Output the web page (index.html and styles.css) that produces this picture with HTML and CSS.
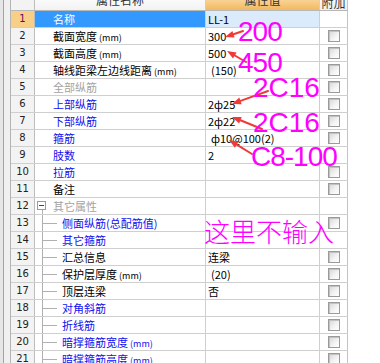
FILE: index.html
```html
<!DOCTYPE html>
<html>
<head>
<meta charset="utf-8">
<link rel="stylesheet" href="styles.css">
</head>
<body>
<div class="frame">
  <div class="gutter"></div>
  <div class="grid">
    <div class="row head">
      <div class="num"></div>
      <div class="name hname">属性名称</div>
      <div class="val hval">属性值</div>
      <div class="chk hchk">附加</div>
    </div>
    <div class="row sel">
      <div class="num">1</div>
      <div class="name">名称</div>
      <div class="val">LL-1</div>
      <div class="chk"></div>
    </div>
    <div class="row">
      <div class="num">2</div>
      <div class="name">截面宽度<span class="mm">(mm)</span></div>
      <div class="val">300</div>
      <div class="chk"><span class="box"></span></div>
    </div>
    <div class="row">
      <div class="num">3</div>
      <div class="name">截面高度<span class="mm">(mm)</span></div>
      <div class="val">500</div>
      <div class="chk"><span class="box"></span></div>
    </div>
    <div class="row">
      <div class="num">4</div>
      <div class="name">轴线距梁左边线距离<span class="mm">(mm)</span></div>
      <div class="val ind">(150)</div>
      <div class="chk"><span class="box"></span></div>
    </div>
    <div class="row">
      <div class="num">5</div>
      <div class="name gray">全部纵筋</div>
      <div class="val"></div>
      <div class="chk"><span class="box"></span></div>
    </div>
    <div class="row">
      <div class="num">6</div>
      <div class="name blue">上部纵筋</div>
      <div class="val">2ф25</div>
      <div class="chk"><span class="box"></span></div>
    </div>
    <div class="row">
      <div class="num">7</div>
      <div class="name blue">下部纵筋</div>
      <div class="val">2ф22</div>
      <div class="chk"><span class="box"></span></div>
    </div>
    <div class="row">
      <div class="num">8</div>
      <div class="name blue">箍筋</div>
      <div class="val ind">ф10@100(2)</div>
      <div class="chk"><span class="box"></span></div>
    </div>
    <div class="row">
      <div class="num">9</div>
      <div class="name blue">肢数</div>
      <div class="val">2</div>
      <div class="chk"></div>
    </div>
    <div class="row">
      <div class="num">10</div>
      <div class="name blue">拉筋</div>
      <div class="val"></div>
      <div class="chk"><span class="box"></span></div>
    </div>
    <div class="row">
      <div class="num">11</div>
      <div class="name">备注</div>
      <div class="val"></div>
      <div class="chk"><span class="box"></span></div>
    </div>
    <div class="row">
      <div class="num">12</div>
      <div class="name gray group"><span class="minus"></span>其它属性</div>
      <div class="val"></div>
      <div class="chk"></div>
    </div>
    <div class="row">
      <div class="num">13</div>
      <div class="name blue child">侧面纵筋(总配筋值)</div>
      <div class="val"></div>
      <div class="chk"><span class="box"></span></div>
    </div>
    <div class="row">
      <div class="num">14</div>
      <div class="name blue child">其它箍筋</div>
      <div class="val"></div>
      <div class="chk"></div>
    </div>
    <div class="row">
      <div class="num">15</div>
      <div class="name child">汇总信息</div>
      <div class="val">连梁</div>
      <div class="chk"><span class="box"></span></div>
    </div>
    <div class="row">
      <div class="num">16</div>
      <div class="name child">保护层厚度<span class="mm">(mm)</span></div>
      <div class="val ind">(20)</div>
      <div class="chk"><span class="box"></span></div>
    </div>
    <div class="row">
      <div class="num">17</div>
      <div class="name child">顶层连梁</div>
      <div class="val">否</div>
      <div class="chk"><span class="box"></span></div>
    </div>
    <div class="row">
      <div class="num">18</div>
      <div class="name blue child">对角斜筋</div>
      <div class="val"></div>
      <div class="chk"><span class="box"></span></div>
    </div>
    <div class="row">
      <div class="num">19</div>
      <div class="name blue child">折线筋</div>
      <div class="val"></div>
      <div class="chk"><span class="box"></span></div>
    </div>
    <div class="row">
      <div class="num">20</div>
      <div class="name blue child">暗撑箍筋宽度<span class="mm">(mm)</span></div>
      <div class="val"></div>
      <div class="chk"><span class="box"></span></div>
    </div>
    <div class="row">
      <div class="num">21</div>
      <div class="name blue child">暗撑箍筋高度<span class="mm">(mm)</span></div>
      <div class="val"></div>
      <div class="chk"><span class="box"></span></div>
    </div>
  </div>
  <div class="blank"></div>

  <svg class="arrows" width="380" height="363" viewBox="0 0 380 363">
    <g stroke="#f03a3a" stroke-width="2" stroke-linecap="round">
      <line x1="243" y1="31" x2="233.5" y2="34.2"/>
      <line x1="246" y1="62" x2="234.8" y2="55.5"/>
      <line x1="268" y1="91" x2="240.5" y2="100.9"/>
      <line x1="262" y1="129" x2="240.4" y2="120.3"/>
      <line x1="252" y1="154" x2="236.7" y2="144.7"/>
    </g>
    <g fill="#f03a3a">
      <polygon points="225,37 234.6,37.5 232.4,30.9"/>
      <polygon points="227,51 236.6,52.5 233,58.5"/>
      <polygon points="232,104 241.7,104.2 239.3,97.6"/>
      <polygon points="232,117 241.7,117.1 239.1,123.6"/>
      <polygon points="229,140 238.5,141.7 234.9,147.7"/>
    </g>
  </svg>
  <div class="note n200">200</div>
  <div class="note n450">450</div>
  <div class="note n2c1">2C16</div>
  <div class="note n2c2">2C16</div>
  <div class="note nc8">C8-100</div>
  <div class="note ncn">这里不输入</div>
</div>
</body>
</html>
```

FILE: styles.css
```css
html, body {
  margin: 0;
  padding: 0;
  background: #ffffff;
}

.frame {
  position: relative;
  width: 380px;
  height: 363px;
  overflow: hidden;
  display: flex;
  align-items: flex-start;
  font-family: "Noto Sans CJK SC", "Liberation Sans", sans-serif;
  font-size: 11px;
  color: #000;
}

.gutter {
  width: 11px;
  height: 363px;
  flex: none;
  background: linear-gradient(to right, #e6e6e6 0 3px, #a3a3a3 3px 4px, #f0f0f0 4px 10px, #b4b4b4 10px 11px);
}

.grid {
  flex: none;
  width: 337px;
  margin-top: -6px;
  display: flex;
  flex-direction: column;
}

.blank {
  flex: 1;
  height: 363px;
  background: #fff;
}

.row {
  display: grid;
  grid-template-columns: 24px 171px 114px 28px;
  height: 17px;
  box-sizing: border-box;
  border-bottom: 1px solid #cfcfcf;
}

.row > div {
  box-sizing: border-box;
  border-right: 1px solid #cfcfcf;
  height: 16px;
  line-height: 16px;
  white-space: nowrap;
  overflow: hidden;
  position: relative;
}

.num {
  background: #f3f3f3;
  text-align: center;
  font-family: "DejaVu Sans", sans-serif;
  font-size: 10px;
  color: #222;
  border-right-color: #bdbdbd !important;
}

.name {
  padding-left: 18px;
}

.val {
  padding-left: 2px;
  font-size: 11px;
}

.val.ind {
  padding-left: 5px;
}

.chk {
  display: flex;
  align-items: center;
  justify-content: center;
  border-right-color: #c4c4c4 !important;
}

.box {
  width: 12px;
  height: 12px;
  box-sizing: border-box;
  border: 1px solid #9a9a9a;
  background: linear-gradient(135deg, #d6d6d6, #f4f4f4 60%, #ffffff);
  box-shadow: inset 1px 1px 0 #c2c2c2;
}

.mm {
  font-size: 9px;
  margin-left: 2px;
}

.gray {
  color: #a3a3a3;
}

.blue {
  color: #1010f0;
}

/* header */
.head {
  height: 17px;
  border-bottom: 1px solid #b8b8b8;
}

.head > div {
  color: #333;
  line-height: 11px;
  font-size: 12px;
}

.hname {
  background: linear-gradient(#ffffff, #f2f2f2);
  padding-left: 0;
  text-align: center;
}

.hval {
  background: linear-gradient(#fbe3b5, #f2b95e);
  text-align: center;
  padding-left: 0;
}

.hchk {
  background: linear-gradient(#ffffff, #eeeeee);
  justify-content: center;
}

/* selected row */
.sel .num {
  background: #f8cf86;
  color: #6a006a;
}

.sel .name {
  background: #3399ff;
  color: #fff;
}

.sel .val {
  background: #dcebfb;
}

/* tree */
.group {
  padding-left: 18px;
}

.minus {
  position: absolute;
  left: 2px;
  top: 3px;
  width: 9px;
  height: 9px;
  box-sizing: border-box;
  border: 1px solid #9a9a9a;
  background: #fff;
}

.minus::after {
  content: "";
  position: absolute;
  left: 1px;
  top: 3px;
  width: 5px;
  height: 1px;
  background: #444;
}

.group::after {
  content: "";
  position: absolute;
  left: 7px;
  top: 12px;
  width: 1px;
  height: 5px;
  background: #b0b0b0;
}

.child {
  padding-left: 27px;
}

.child::before {
  content: "";
  position: absolute;
  left: 7px;
  top: -1px;
  width: 1px;
  height: 18px;
  background: #b0b0b0;
}

.child::after {
  content: "";
  position: absolute;
  left: 8px;
  top: 8px;
  width: 14px;
  height: 1px;
  background: #b0b0b0;
}

/* annotations */
.arrows {
  position: absolute;
  left: 0;
  top: 0;
  pointer-events: none;
}

.note {
  position: absolute;
  color: #ff00ff;
  font-family: "Liberation Sans", sans-serif;
  font-size: 28px;
  line-height: 1;
  white-space: nowrap;
}

.n200 { left: 238px; top: 18px; letter-spacing: -1px; }
.n450 { left: 238px; top: 49px; letter-spacing: -1px; }
.n2c1 { left: 253px; top: 74px; }
.n2c2 { left: 253px; top: 109px; }
.nc8 { left: 251px; top: 143px; letter-spacing: -1px; }

.ncn {
  left: 204px;
  top: 218px;
  font-family: "Noto Sans CJK SC", sans-serif;
  font-weight: 200;
  font-size: 26px;
  letter-spacing: 0;
}
```
